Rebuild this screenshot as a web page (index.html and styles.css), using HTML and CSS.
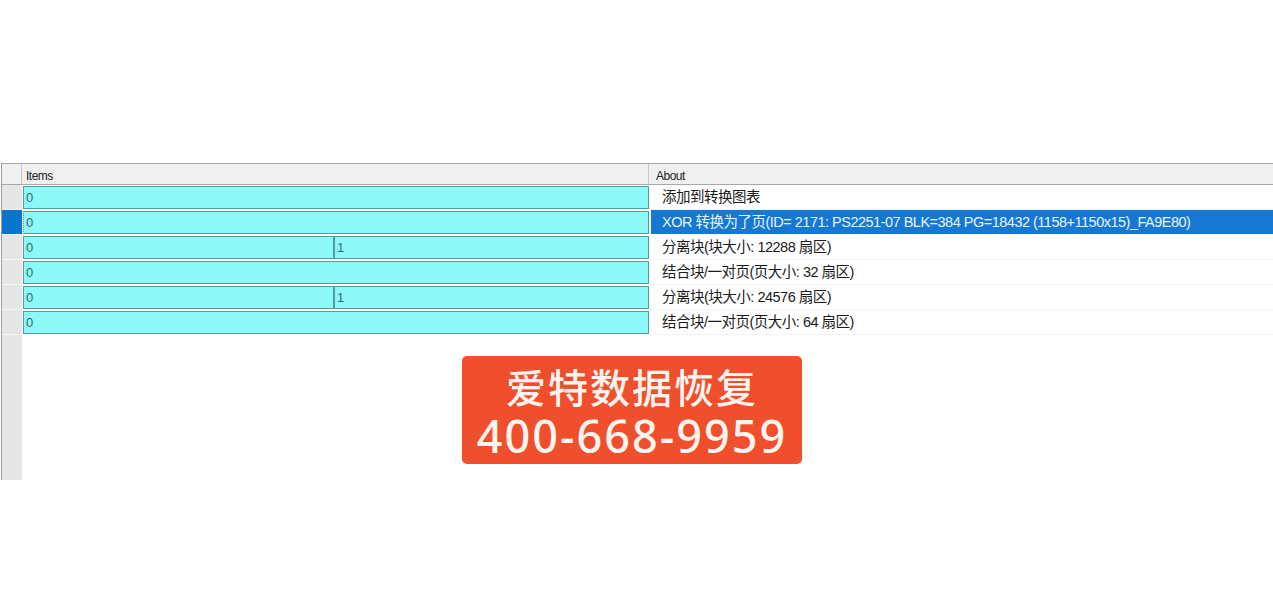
FILE: index.html
```html
<!DOCTYPE html>
<html lang="zh">
<head>
<meta charset="utf-8">
<link rel="stylesheet" href="styles.css">
</head>
<body>
<div class="page">
  <div class="grid">
    <div class="row head">
      <div class="gut"></div>
      <div class="hcell items-h">Items</div>
      <div class="hcell about-h">About</div>
    </div>
    <div class="row">
      <div class="gut"></div>
      <div class="items"><div class="cell full">0</div></div>
      <div class="about">添加到转换图表</div>
    </div>
    <div class="row sel">
      <div class="gut"></div>
      <div class="items"><div class="cell full focus">0</div></div>
      <div class="about">XOR 转换为了页(ID= 2171: PS2251-07 BLK=384 PG=18432 (1158+1150x15)_FA9E80)</div>
    </div>
    <div class="row">
      <div class="gut"></div>
      <div class="items"><div class="cell left">0</div><div class="cell right">1</div></div>
      <div class="about">分离块(块大小: 12288 扇区)</div>
    </div>
    <div class="row">
      <div class="gut"></div>
      <div class="items"><div class="cell full">0</div></div>
      <div class="about">结合块/一对页(页大小: 32 扇区)</div>
    </div>
    <div class="row">
      <div class="gut"></div>
      <div class="items"><div class="cell left">0</div><div class="cell right">1</div></div>
      <div class="about">分离块(块大小: 24576 扇区)</div>
    </div>
    <div class="row">
      <div class="gut"></div>
      <div class="items"><div class="cell full">0</div></div>
      <div class="about">结合块/一对页(页大小: 64 扇区)</div>
    </div>
    <div class="row filler">
      <div class="gut"></div>
      <div class="blank">
        <div class="badge">
          <div class="b1">爱特数据恢复</div>
          <div class="b2">400-668-9959</div>
        </div>
      </div>
    </div>
  </div>
</div>
</body>
</html>
```

FILE: styles.css
```css
html, body {
  margin: 0;
  padding: 0;
  background: #ffffff;
}
body {
  font-family: "Liberation Sans", "Noto Sans CJK SC", sans-serif;
  width: 1273px;
  height: 603px;
  overflow: hidden;
}
.page {
  padding-top: 163px;
}
.grid {
  margin-left: 1px;
  border-left: 1px solid #9a9a9a;
  display: flex;
  flex-direction: column;
}
.row {
  display: flex;
  height: 25px;
}
.gut {
  width: 20px;
  flex: none;
  background: #e6e6e6;
  border-bottom: 1px solid #f6f6f6;
  box-sizing: border-box;
}
.head {
  height: 22px;
  background: #f0f0f0;
  border-top: 1px solid #a8a8a8;
  border-bottom: 1px solid #a8a8a8;
  box-sizing: border-box;
}
.head .gut {
  background: #f0f0f0;
  border-right: 1px solid #c8c8c8;
  border-bottom: none;
}
.hcell {
  font-size: 12px;
  color: #222;
  line-height: 20px;
  padding-top: 2px;
  letter-spacing: -0.5px;
  box-sizing: border-box;
}
.items-h {
  width: 627px;
  padding-left: 4px;
  border-right: 1px solid #c8c8c8;
  flex: none;
}
.about-h {
  flex: 1;
  padding-left: 7px;
}
.items {
  width: 627px;
  flex: none;
  display: flex;
  padding: 1px 0 0 1px;
  box-sizing: border-box;
}
.cell {
  height: 23px;
  background: #8ff8f8;
  border: 1px solid #4f9d9d;
  box-sizing: border-box;
  font-size: 13px;
  line-height: 21px;
  color: #2f6e6e;
  padding-left: 2px;
}
.full { flex: 1; }
.left { width: 312px; flex: none; border-right: 2px solid #4f9d9d; }
.right { flex: 1; border-left: none; }
.focus { border-left: 1px dotted #4f9d9d; }
.about {
  flex: 1;
  font-size: 14.5px;
  line-height: 25px;
  padding-left: 13px;
  color: #1a1a1a;
  white-space: nowrap;
  letter-spacing: -0.5px;
  border-bottom: 1px solid #f4f4f4;
  box-sizing: border-box;
}
.sel .gut {
  background: #0b74cc;
}
.sel .about {
  background: #1678d2;
  color: #e8f4ff;
  margin-left: 2px;
  padding-left: 11px;
  height: 24px;
  line-height: 24px;
  border-bottom: none;
}
.filler {
  height: 145px;
}
.filler .gut {
  border-bottom: none;
}
.blank {
  flex: 1;
  padding: 21px 0 0 440px;
  box-sizing: border-box;
}
.badge {
  width: 340px;
  height: 108px;
  background: #ef4f2d;
  border-radius: 5px;
  color: #fff4ee;
  text-align: center;
  box-sizing: border-box;
  padding-top: 5px;
}
.b1 {
  font-family: "Noto Sans CJK SC", sans-serif;
  font-size: 40px;
  line-height: 50px;
  font-weight: 500;
  letter-spacing: 2px;
}
.b2 {
  font-family: "Noto Sans", "Open Sans", sans-serif;
  font-size: 45px;
  line-height: 50px;
  font-weight: 500;
  letter-spacing: 2px;
}
```
